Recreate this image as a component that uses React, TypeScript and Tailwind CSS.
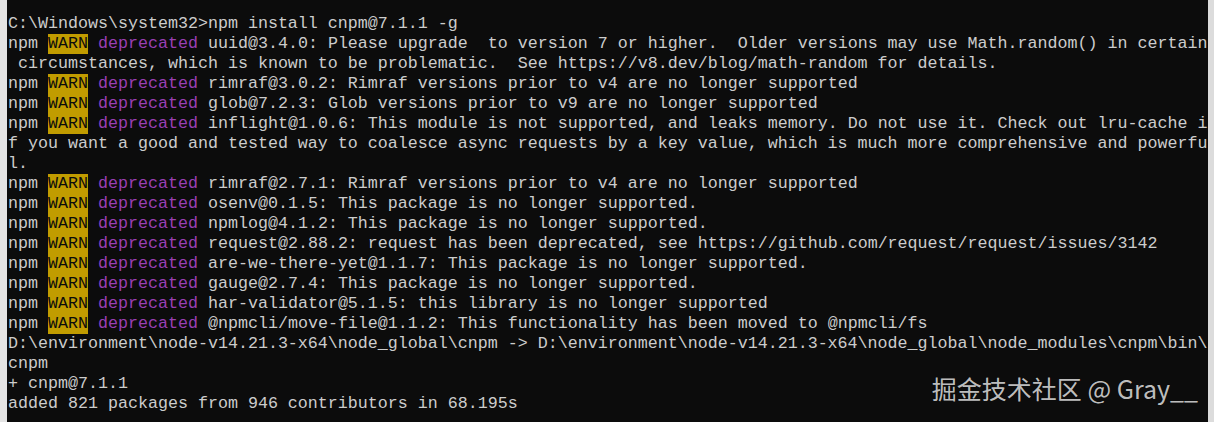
import React from 'react';

type Line = { warn?: string; text: string };

// console output, wrapped at 120 columns like the Windows console
const lines: Line[] = [
  { text: 'C:\\Windows\\system32>npm install cnpm@7.1.1 -g' },
  { warn: 'uuid@3.4.0: Please upgrade  to version 7 or higher.  Older versions may use Math.random() in certain', text: '' },
  { text: ' circumstances, which is known to be problematic.  See https://v8.dev/blog/math-random for details.' },
  { warn: 'rimraf@3.0.2: Rimraf versions prior to v4 are no longer supported', text: '' },
  { warn: 'glob@7.2.3: Glob versions prior to v9 are no longer supported', text: '' },
  { warn: 'inflight@1.0.6: This module is not supported, and leaks memory. Do not use it. Check out lru-cache i', text: '' },
  { text: 'f you want a good and tested way to coalesce async requests by a key value, which is much more comprehensive and powerfu' },
  { text: 'l.' },
  { warn: 'rimraf@2.7.1: Rimraf versions prior to v4 are no longer supported', text: '' },
  { warn: 'osenv@0.1.5: This package is no longer supported.', text: '' },
  { warn: 'npmlog@4.1.2: This package is no longer supported.', text: '' },
  { warn: 'request@2.88.2: request has been deprecated, see https://github.com/request/request/issues/3142', text: '' },
  { warn: 'are-we-there-yet@1.1.7: This package is no longer supported.', text: '' },
  { warn: 'gauge@2.7.4: This package is no longer supported.', text: '' },
  { warn: 'har-validator@5.1.5: this library is no longer supported', text: '' },
  { warn: '@npmcli/move-file@1.1.2: This functionality has been moved to @npmcli/fs', text: '' },
  { text: 'D:\\environment\\node-v14.21.3-x64\\node_global\\cnpm -> D:\\environment\\node-v14.21.3-x64\\node_global\\node_modules\\cnpm\\bin\\' },
  { text: 'cnpm' },
  { text: '+ cnpm@7.1.1' },
  { text: 'added 821 packages from 946 contributors in 68.195s' },
];

export default function App() {
  return (
    <div className="relative flex h-[422px] w-[1214px] overflow-hidden bg-[#0c0c0c]">
      {/* window frame edges */}
      <div className="w-[7px] shrink-0 bg-[#e4e4e4]" />

      <div className="flex-1 overflow-hidden pl-px pt-[14px] font-['Liberation_Mono',monospace] text-[16.667px] leading-[20px] text-[#cccccc]">
        {lines.map((line, i) => (
          <div key={i} className="h-[20px] whitespace-pre">
            {line.warn !== undefined ? (
              <>
                npm <span className="inline-block h-[20px] bg-[#c19c00] align-top text-[#0c0c0c]">WARN</span>{' '}
                <span className="text-[#9a3fb4]">deprecated</span> {line.warn}
              </>
            ) : (
              line.text
            )}
          </div>
        ))}
      </div>

      <div className="w-[6px] shrink-0 bg-[#dcdcdc]" />

      {/* watermark */}
      <div className="absolute right-[16px] top-[373px] font-['Noto_Sans_CJK_SC','Noto_Sans',sans-serif] text-[25px] leading-[30px] text-[#d6d6d6]/90">
        掘金技术社区 @ Gray__
      </div>
    </div>
  );
}
